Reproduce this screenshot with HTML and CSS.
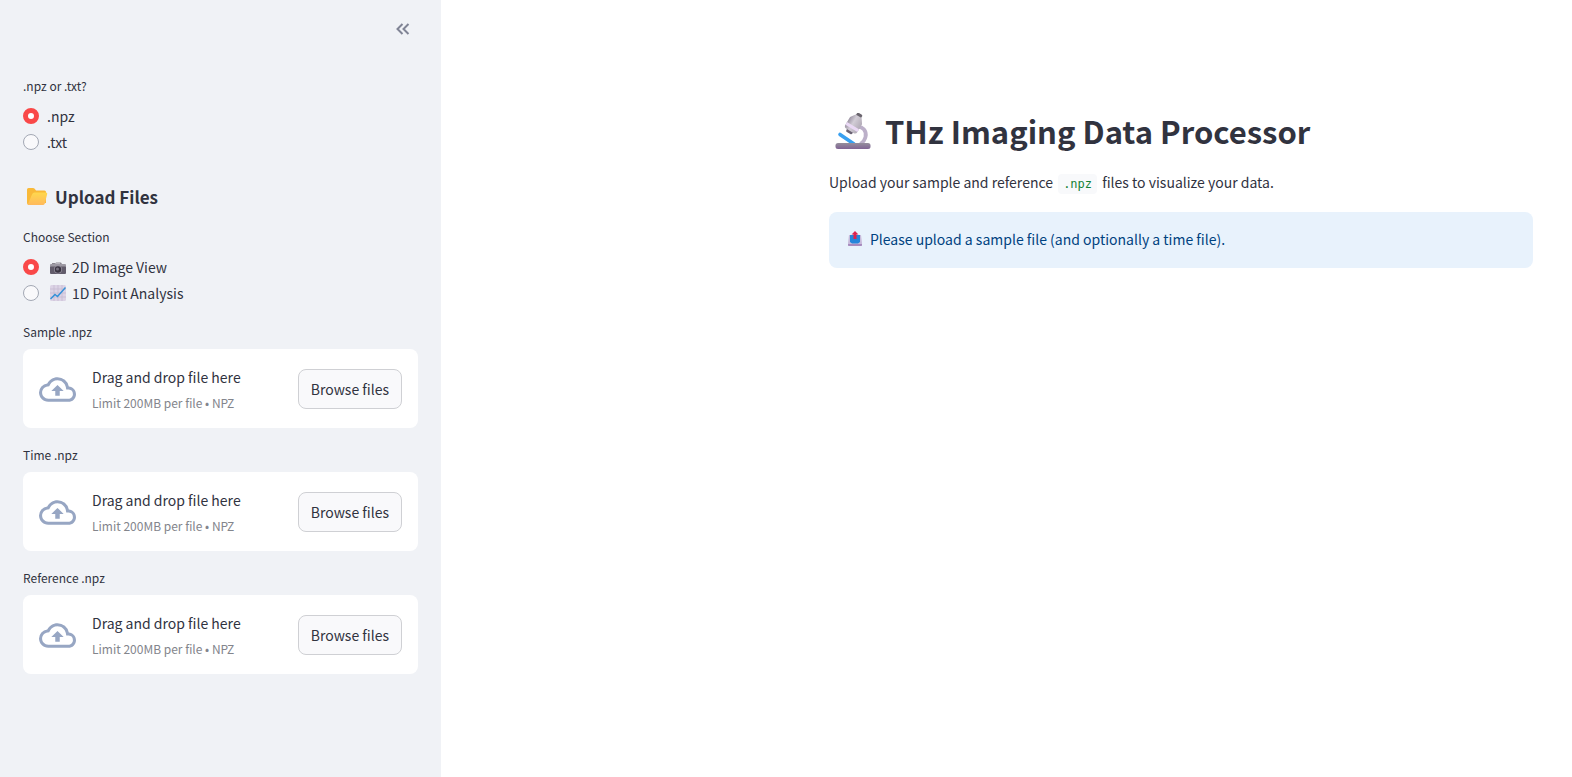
FILE: index.html
```html
<!DOCTYPE html>
<html lang="en">
<head>
<meta charset="utf-8">
<meta name="viewport" content="width=device-width, initial-scale=1">
<title>THz Imaging Data Processor</title>
<link rel="stylesheet" href="styles.css">
</head>
<body>
<svg width="0" height="0" class="defs" aria-hidden="true">
  <defs>
    <symbol id="cloud" viewBox="0 0 24 24">
      <path d="M19.35 10.04A7.49 7.49 0 0 0 12 4C9.11 4 6.6 5.64 5.35 8.04A5.994 5.994 0 0 0 0 14c0 3.31 2.69 6 6 6h13c2.76 0 5-2.24 5-5 0-2.64-2.05-4.78-4.65-4.96zM19 18H6c-2.21 0-4-1.79-4-4 0-2.05 1.53-3.76 3.56-3.97l1.07-.11.5-.95A5.469 5.469 0 0 1 12 6c2.62 0 4.88 1.86 5.39 4.43l.3 1.5 1.53.11A2.98 2.98 0 0 1 22 15c0 1.65-1.35 3-3 3zM8 13h2.55v3h2.9v-3H16l-4-4z"/>
    </symbol>
  </defs>
</svg>
<div class="app">
  <aside class="sidebar">
    <header class="sidebar-header">
      <button class="collapse" type="button" aria-label="Collapse sidebar">
        <svg viewBox="0 0 14 12"><path d="M6.5 1 1.5 6l5 5M12.5 1l-5 5 5 5"/></svg>
      </button>
    </header>

    <fieldset class="radio-group">
      <legend class="label">.npz or .txt?</legend>
      <label class="option"><input type="radio" name="format" checked><span>.npz</span></label>
      <label class="option"><input type="radio" name="format"><span>.txt</span></label>
    </fieldset>

    <h2 class="section-title">
      <svg class="folder" viewBox="0 0 22 20" aria-hidden="true">
        <defs><linearGradient id="fold" x1="0" y1="0" x2="0" y2="1"><stop offset="0" stop-color="#ffd84d"/><stop offset="1" stop-color="#ffb95c"/></linearGradient></defs>
        <path fill="#f9b938" d="M1 2.500Q1 1 2.500 1H7q1 0 1.700.8L10 3.500h8.500q1.500 0 1.500 1.500v11L3 18q-2 0-2-2z"/>
        <path fill="url(#fold)" d="M8.500 5.500H20q1.600 0 1.200 1.500l-2.400 9.500q-.5 1.500-2 1.500H3q-1.300 0-.8-1.500l3.900-9.300q.7-1.700 2.400-1.700z"/>
      </svg>
      Upload Files
    </h2>

    <fieldset class="radio-group">
      <legend class="label">Choose Section</legend>
      <label class="option"><input type="radio" name="section" checked>
        <svg class="emoji" viewBox="0 0 16 16" aria-hidden="true">
          <path fill="#8b8790" d="M2 4h3v2H2zM5 5l1-1.500h5L12 5v1H5z"/>
          <path fill="#b9b5be" d="M6 4h4v1.500H6z"/>
          <rect y="5" width="16" height="3" rx="1" fill="#9d99a3"/>
          <path fill="#625c6b" d="M0 7.500h16V14q0 1-1 1H1q-1 0-1-1z"/>
          <circle cx="8" cy="10.500" r="4" fill="#938e9c"/><circle cx="8" cy="10.500" r="3.200" fill="#3a3542"/><circle cx="7.500" cy="10" r="1.500" fill="#77717f"/>
        </svg>
        <span>2D Image View</span></label>
      <label class="option"><input type="radio" name="section">
        <svg class="emoji" viewBox="0 0 16 16" aria-hidden="true">
          <rect width="16" height="16" rx="1.500" fill="#dcd3e5"/>
          <path d="M4 0v16M8 0v16M12 0v16M0 4h16M0 8h16M0 12h16" stroke="#c3b8ce" stroke-width=".7"/>
          <path d="M.5 14 5 9.500l2.500 2L15.500 2.500" fill="none" stroke="#3391d8" stroke-width="1.500"/>
        </svg>
        <span>1D Point Analysis</span></label>
    </fieldset>

    <section class="uploader">
      <h3 class="label" id="sample">Sample .npz</h3>
      <div class="dropzone">
        <svg class="cloud" aria-hidden="true"><use href="#cloud"/></svg>
        <div class="instructions"><span>Drag and drop file here</span><small>Limit 200MB per file • NPZ</small></div>
        <button class="browse" type="button" aria-describedby="sample">Browse files</button>
      </div>
    </section>
    <section class="uploader">
      <h3 class="label" id="time">Time .npz</h3>
      <div class="dropzone">
        <svg class="cloud" aria-hidden="true"><use href="#cloud"/></svg>
        <div class="instructions"><span>Drag and drop file here</span><small>Limit 200MB per file • NPZ</small></div>
        <button class="browse" type="button" aria-describedby="time">Browse files</button>
      </div>
    </section>
    <section class="uploader">
      <h3 class="label" id="reference">Reference .npz</h3>
      <div class="dropzone">
        <svg class="cloud" aria-hidden="true"><use href="#cloud"/></svg>
        <div class="instructions"><span>Drag and drop file here</span><small>Limit 200MB per file • NPZ</small></div>
        <button class="browse" type="button" aria-describedby="reference">Browse files</button>
      </div>
    </section>
  </aside>

  <main class="main">
    <div class="content">
      <h1 class="title">
        <svg class="microscope" viewBox="0 0 36 36" aria-hidden="true">
          <defs>
            <linearGradient id="tube"><stop offset="0" stop-color="#9c94a4"/><stop offset=".4" stop-color="#d2cdd6"/><stop offset="1" stop-color="#b3acb8"/></linearGradient>
            <linearGradient id="base" x1="0" y1="0" x2="0" y2="1"><stop offset="0" stop-color="#958e9c"/><stop offset="1" stop-color="#806394"/></linearGradient>
          </defs>
          <path d="M20 14.500c8-2.500 12 4 10.500 9.500-.7 3.500-3 5.500-5 7" fill="none" stroke="#bcb0c9" stroke-width="3.800"/>
          <path d="M5 21.500 19 31" stroke="#39a0f0" stroke-width="3.600" stroke-linecap="round"/>
          <g transform="rotate(31 19 11)">
            <rect x="16" y="-1" width="6" height="5" rx="1.500" fill="#6a656e"/>
            <rect x="15.500" y="17" width="7" height="4.500" rx="1.500" fill="#6a6273"/>
            <path fill="url(#tube)" d="M15.500 2h7l3.500 5v9q0 3-3 3h-8q-3 0-3-3V7z"/>
            <path fill="#ead9f5" d="M12 13h14v3H12z"/>
          </g>
          <rect x=".5" y="30" width="35" height="6" rx="2.500" fill="url(#base)"/>
        </svg>
        <span>THz Imaging Data Processor</span>
      </h1>
      <p class="intro">Upload your sample and reference <code>.npz</code> files to visualize your data.</p>
      <div class="alert" role="alert">
        <svg class="tray" viewBox="0 0 14 16" aria-hidden="true">
          <path fill="#c8bbdb" d="M1 4h12l1 8v2q0 1-1 1H1q-1 0-1-1v-2z"/>
          <path fill="#a78abd" d="M0 13h14v1q0 1-1 1H1q-1 0-1-1z"/>
          <path fill="#2585da" d="M2 4h10v7l-2 1.500H4L2 11z"/>
          <path fill="#dc234f" d="m7 0 3.500 3.500H8.500V8h-3V3.500h-2z"/>
        </svg>
        <span>Please upload a sample file (and optionally a time file).</span>
      </div>
    </div>
  </main>
</div>
</body>
</html>
```
FILE: styles.css
```css
* { box-sizing: border-box; }
body {
  margin: 0;
  color: #31333f;
  background: #fff;
  font-family: "Noto Sans CJK JP", "Noto Sans", sans-serif;
  font-size: 14px;
  line-height: 26px;
}
h1, h2, h3, p { margin: 0; }
svg { flex: none; }
button { font: inherit; color: inherit; cursor: pointer; }
.defs { position: absolute; }

.app { display: flex; min-height: 100vh; }
.sidebar {
  flex: 0 0 441px;
  padding: 0 23px 32px;
  background: #f0f2f6;
}
.sidebar-header {
  display: flex;
  justify-content: flex-end;
  align-items: center;
  height: 58px;
  margin-bottom: 16px;
}
.collapse {
  display: flex;
  padding: 8px;
  border: 0;
  background: none;
}
.collapse svg {
  width: 14px;
  height: 12px;
  fill: none;
  stroke: #808495;
  stroke-width: 2;
}

.label {
  padding: 0;
  font-size: 12px;
  font-weight: 400;
  line-height: 24px;
}
.radio-group {
  margin: 0;
  padding: 0;
  border: 0;
}
.radio-group .label { margin-bottom: 5px; }
.option {
  display: flex;
  align-items: center;
  gap: 8px;
}
.option input {
  appearance: none;
  width: 16px;
  height: 16px;
  margin: 0;
  border: 1px solid #a3a8b4;
  border-radius: 50%;
  background: #f9f9fb;
}
.option input:checked {
  border: 5px solid #f94848;
  background: #fff;
}
.emoji {
  width: 16px;
  height: 16px;
  margin: 0 -2px 0 3px;
}

.section-title {
  display: flex;
  align-items: center;
  gap: 7px;
  margin: 29px 0 15px;
  padding-left: 3px;
  font-size: 17px;
  font-weight: 600;
  line-height: 26px;
}
.folder { width: 22px; height: 20px; }

.uploader { margin-top: 15px; }
.uploader .label { margin-bottom: 5px; }
.radio-group + .uploader { margin-top: 14px; }
.dropzone {
  display: flex;
  align-items: center;
  gap: 16px;
  min-height: 79px;
  padding: 12px 16px;
  border-radius: 8px;
  background: #fff;
}
.cloud {
  width: 37px;
  height: 37px;
  margin-top: 2px;
  fill: #97a6c3;
}
.instructions {
  display: flex;
  flex: 1;
  flex-direction: column;
  padding-top: 2px;
}
.instructions small {
  font-size: 12px;
  color: #83858c;
}
.browse {
  height: 40px;
  padding: 0 12px;
  border: 1px solid #cfd0d4;
  border-radius: 8px;
  background: #f9f9fb;
  white-space: nowrap;
}

.main {
  display: flex;
  flex: 1;
  justify-content: flex-end;
  padding: 106px 39px 32px 32px;
}
.content { flex: 0 1 704px; }
.title {
  display: flex;
  align-items: center;
  gap: 14px;
  padding-left: 6px;
  font-size: 31px;
  font-weight: 600;
  line-height: 50px;
}
.microscope { width: 36px; height: 36px; }
.intro { margin: 13px 0 15px; }
code {
  margin: 0 2px;
  padding: 3px 5px;
  border-radius: 4px;
  color: #158237;
  background: #f8f9fb;
  font-family: "DejaVu Sans Mono", monospace;
  font-size: 12px;
}
.alert {
  display: flex;
  align-items: center;
  gap: 8px;
  padding: 14px 19px 16px;
  border-radius: 8px;
  color: #004280;
  background: #e8f2fc;
}
.tray { width: 14px; height: 16px; }
```
